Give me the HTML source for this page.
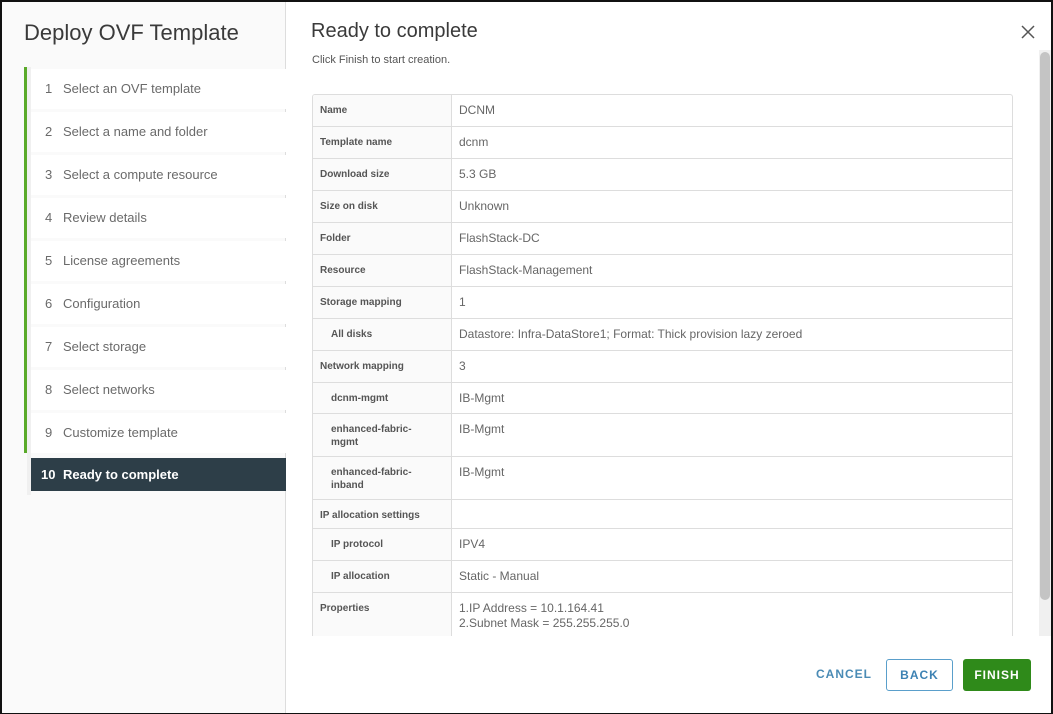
<!DOCTYPE html>
<html><head><meta charset="utf-8"><style>
*{box-sizing:border-box;margin:0;padding:0}
body{width:1053px;height:714px;position:relative;overflow:hidden;background:#fff;font-family:"Liberation Sans",sans-serif}
.frame{position:absolute;left:0;top:0;width:1053px;height:714px;border-top:2px solid #111;border-left:2px solid #111;border-right:2px solid #111;border-bottom:1px solid #111}
.side{position:absolute;left:2px;top:2px;width:284px;height:711px;background:#fafafa;border-right:1px solid #ddd}
.title{position:absolute;left:24px;top:20px;font-size:22px;color:#3a3a3a}
.green{position:absolute;left:24px;top:67px;width:3px;height:386px;background:#5aaa2a}
.stepbg{position:absolute;left:27px;top:67px;width:4px;height:428px;background:#f0f0f0}
.step{position:absolute;left:31px;width:255px;height:40px;background:#fff;font-size:13px;color:#6a6a6a;padding:0 0 0 14px;line-height:40px}
.step b{font-weight:normal;display:inline-block;width:18px}
.step.act{background:#2d3e48;color:#fff;font-weight:bold;padding-left:10px;height:33px;line-height:33px}
.step.act b{font-weight:bold;width:22px}
.h{position:absolute;left:311px;top:20px;font-size:20px;color:#3a3a3a}
.sub{position:absolute;left:312px;top:54px;font-size:11px;color:#555}
.tbl{position:absolute;left:312px;top:94px;width:701px;height:545px;border:1px solid #ddd;border-bottom:none;border-radius:3px 3px 0 0;overflow:hidden}
.r{position:absolute;left:0;width:700px;border-bottom:1px solid #ddd}
.l{position:absolute;left:0;top:0;bottom:0;width:139px;background:#fafafa;border-right:1px solid #ddd;font-size:10px;font-weight:bold;color:#555;padding:9px 0 0 7px;line-height:13px}
.l.in{padding-left:18px}
.v{position:absolute;left:146px;top:8px;font-size:12px;color:#666;line-height:15px}
.x{position:absolute;left:1020px;top:24px;width:16px;height:16px}
.sb{position:absolute;left:1039px;top:50px;width:12px;height:586px;background:#f0f0f0}
.th{position:absolute;left:1040px;top:52px;width:10px;height:548px;background:#c4c4c4;border-radius:5px}
.btn{position:absolute;top:659px;height:32px;font-size:12px;font-weight:bold;letter-spacing:1px;text-align:center;line-height:30px;border-radius:3px}
</style></head><body>
<div class="side"></div>
<div class="title">Deploy OVF Template</div>
<div class="stepbg"></div>
<div class="green"></div>
<div class="step" style="top:69px"><b>1</b>Select an OVF template</div>
<div class="step" style="top:112px"><b>2</b>Select a name and folder</div>
<div class="step" style="top:155px"><b>3</b>Select a compute resource</div>
<div class="step" style="top:198px"><b>4</b>Review details</div>
<div class="step" style="top:241px"><b>5</b>License agreements</div>
<div class="step" style="top:284px"><b>6</b>Configuration</div>
<div class="step" style="top:327px"><b>7</b>Select storage</div>
<div class="step" style="top:370px"><b>8</b>Select networks</div>
<div class="step" style="top:413px"><b>9</b>Customize template</div>
<div class="step act" style="top:458px"><b>10</b>Ready to complete</div>

<div class="h">Ready to complete</div>
<div class="sub">Click Finish to start creation.</div>
<div class="tbl">
<div class="r" style="top:0;height:32px"><div class="l">Name</div><div class="v">DCNM</div></div>
<div class="r" style="top:32px;height:32px"><div class="l">Template name</div><div class="v">dcnm</div></div>
<div class="r" style="top:64px;height:32px"><div class="l">Download size</div><div class="v">5.3 GB</div></div>
<div class="r" style="top:96px;height:32px"><div class="l">Size on disk</div><div class="v">Unknown</div></div>
<div class="r" style="top:128px;height:32px"><div class="l">Folder</div><div class="v">FlashStack-DC</div></div>
<div class="r" style="top:160px;height:32px"><div class="l">Resource</div><div class="v">FlashStack-Management</div></div>
<div class="r" style="top:192px;height:32px"><div class="l">Storage mapping</div><div class="v">1</div></div>
<div class="r" style="top:224px;height:32px"><div class="l in">All disks</div><div class="v">Datastore: Infra-DataStore1; Format: Thick provision lazy zeroed</div></div>
<div class="r" style="top:256px;height:32px"><div class="l">Network mapping</div><div class="v">3</div></div>
<div class="r" style="top:288px;height:31px"><div class="l in">dcnm-mgmt</div><div class="v">IB-Mgmt</div></div>
<div class="r" style="top:319px;height:43px"><div class="l in">enhanced-fabric-<br>mgmt</div><div class="v">IB-Mgmt</div></div>
<div class="r" style="top:362px;height:43px"><div class="l in">enhanced-fabric-<br>inband</div><div class="v">IB-Mgmt</div></div>
<div class="r" style="top:405px;height:29px"><div class="l">IP allocation settings</div></div>
<div class="r" style="top:434px;height:32px"><div class="l in">IP protocol</div><div class="v">IPV4</div></div>
<div class="r" style="top:466px;height:32px"><div class="l in">IP allocation</div><div class="v">Static - Manual</div></div>
<div class="r" style="top:498px;height:60px;border-bottom:none"><div class="l">Properties</div><div class="v">1.IP Address = 10.1.164.41<br>2.Subnet Mask = 255.255.255.0</div></div>
</div>
<div style="position:absolute;left:312px;top:636px;width:730px;height:78px;background:#fff"></div>
<svg class="x" viewBox="0 0 16 16"><path d="M2 2L14 14M14 2L2 14" stroke="#555" stroke-width="1.5"/></svg>
<div class="sb"></div><div class="th"></div>
<div class="btn" style="left:806px;width:76px;color:#4a8bb5">CANCEL</div>
<div class="btn" style="left:886px;width:67px;border:1px solid #5a9fcb;color:#3d82b3">BACK</div>
<div class="btn" style="left:963px;width:68px;background:#2f8a1a;color:#fff;line-height:32px">FINISH</div>
<div class="frame"></div>
</body></html>
